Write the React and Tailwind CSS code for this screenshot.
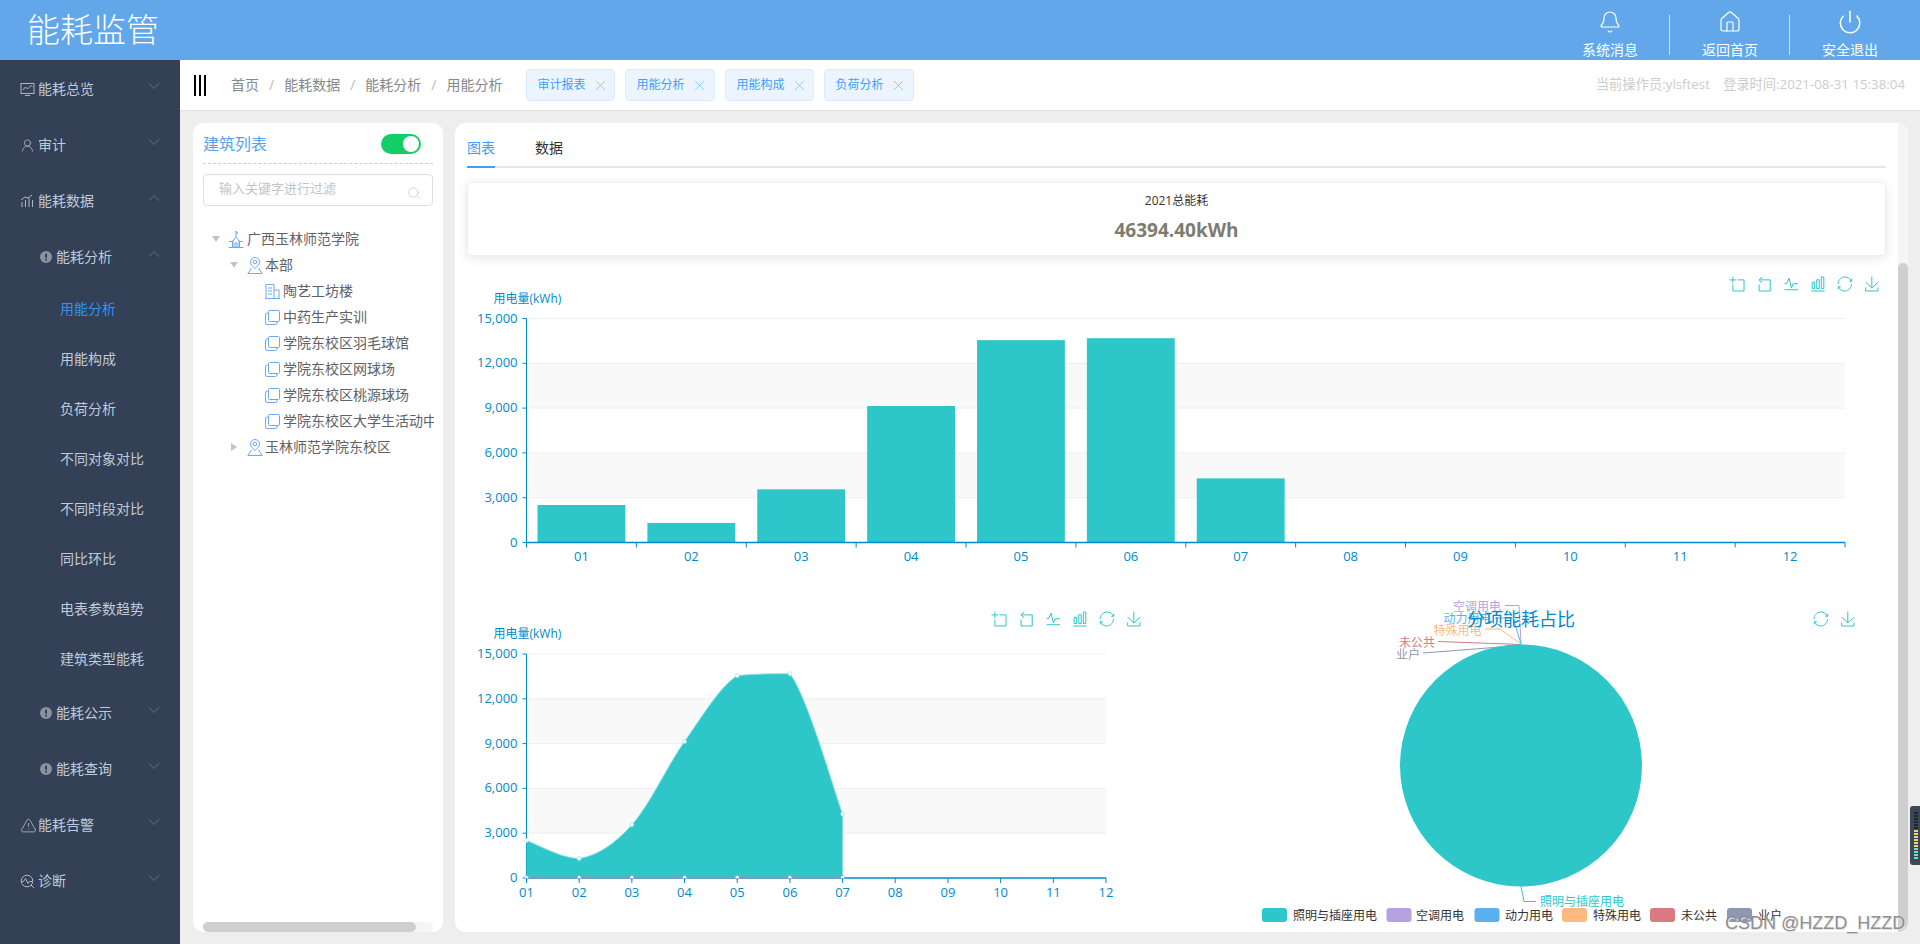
import React from "react";
import { Bell, ChevronDown, ChevronUp, House, Power, Search, UserRound, TriangleAlert, X } from "lucide-react";

const AXIS = "#008acd";
const TEAL = "#2ec7c9";
const months = ["01", "02", "03", "04", "05", "06", "07", "08", "09", "10", "11", "12"];
const values = [2510, 1310, 3560, 9140, 13550, 13680, 4294];
const ticks = [0, 3000, 6000, 9000, 12000, 15000];

const toolPaths = {
  zoom: "M0,13.5h26.9 M13.5,26.9V0 M32.1,13.5H58V58H13.5V32.1",
  back: "M22,1.4L9.9,13.5l12.3,12.3 M10.3,13.5H54.9v44.6H10.3v-26",
  line: "M4.1,28.9h7.8l10.3-22.1l9.4,38.7l7.3-16.6H58 M4.1,52.9h53.9",
  bar: "M6.7,22.9h10V48h-10V22.9z M24.9,13h10v35h-10V13z M43.2,2h10v46h-10V2z M3.1,58h53.7",
  restore:
    "M47,18.9h9.8V8.7 M56.3,20.1C52.1,9,40.5,0.6,26.8,2.1C12.6,3.7,1.6,16.2,2.1,30.6 M13,41.1H3.1v10.2 M3.7,39.9c4.2,11.1,15.8,19.5,27.4,18c14.2-1.6,25.2-14.1,24.7-28.5",
  save: "M4.7,22.9L29.3,45.5L54.7,23.4 M4.6,43.6L4.6,58L53.8,58L53.8,43.6 M29.2,45.1L29.2,0",
};

function Tool({ type, x, y }) {
  return (
    <svg x={x - 8} y={y - 8} width="16" height="16" viewBox="-2 -2 64 64">
      <path d={toolPaths[type]} fill="none" stroke={TEAL} strokeWidth="4" />
    </svg>
  );
}

function Grid({ left, right, top, bottom }) {
  const step = (bottom - top) / 5;
  return (
    <g>
      {[1, 3].map((i) => (
        <rect key={i} x={left} y={bottom - step * (i + 1)} width={right - left} height={step} fill="#f9f9f9" />
      ))}
      {ticks.map((t, i) => (
        <g key={t}>
          {i > 0 && <line x1={left} x2={right} y1={bottom - step * i} y2={bottom - step * i} stroke="#eee" />}
          <line x1={left - 4} x2={left} y1={bottom - step * i} y2={bottom - step * i} stroke={AXIS} />
          <text x={left - 9} y={bottom - step * i + 4} textAnchor="end" fontSize="13" fill={AXIS}>
            {t.toLocaleString("en-US")}
          </text>
        </g>
      ))}
      <line x1={left} x2={left} y1={top} y2={bottom} stroke={AXIS} />
      <text x={left - 33} y={top - 16} fontSize="12" fill={AXIS}>
        用电量(kWh)
      </text>
    </g>
  );
}

function BarChart() {
  const left = 526.5, right = 1845, top = 318.5, bottom = 542.5;
  const band = (right - left) / 12;
  return (
    <svg width="1419" height="344" viewBox="467 256 1419 344" className="block">
      {["zoom", "back", "line", "bar", "restore", "save"].map((t, i) => (
        <Tool key={t} type={t} x={1737 + i * 27} y={284} />
      ))}
      <Grid left={left} right={right} top={top} bottom={bottom} />
      {values.map((v, i) => {
        const h = (v / 15000) * (bottom - top);
        return <rect key={i} x={left + band * i + 11} y={bottom - h} width={band - 22} height={h} fill={TEAL} />;
      })}
      <line x1={left} x2={right} y1={bottom} y2={bottom} stroke={AXIS} strokeWidth="1.5" />
      {months.map((m, i) => (
        <g key={m}>
          <line x1={left + band * i} x2={left + band * i} y1={bottom} y2={bottom + 5} stroke={AXIS} />
          <text x={left + band * (i + 0.5)} y={bottom + 18} textAnchor="middle" fontSize="13" fill={AXIS}>
            {m}
          </text>
        </g>
      ))}
      <line x1={right} x2={right} y1={bottom} y2={bottom + 5} stroke={AXIS} />
    </svg>
  );
}

// echarts style smoothing, control points kept between the neighbours
function smoothPath(pts) {
  let d = `M${pts[0][0]},${pts[0][1]}`;
  const clamp = (v, a, b) => Math.max(Math.min(a, b), Math.min(Math.max(a, b), v));
  for (let i = 0; i < pts.length - 1; i++) {
    const p0 = pts[i - 1] || pts[i];
    const p1 = pts[i];
    const p2 = pts[i + 1];
    const p3 = pts[i + 2] || p2;
    const c1x = p1[0] + (p2[0] - p0[0]) * 0.17;
    const c1y = clamp(p1[1] + (p2[1] - p0[1]) * 0.17, p1[1], p2[1]);
    const c2x = p2[0] - (p3[0] - p1[0]) * 0.17;
    const c2y = clamp(p2[1] - (p3[1] - p1[1]) * 0.17, p1[1], p2[1]);
    d += ` C${c1x},${c1y} ${c2x},${c2y} ${p2[0]},${p2[1]}`;
  }
  return d;
}

function AreaChart() {
  const left = 526.5, right = 1106, top = 654, bottom = 878;
  const step = (right - left) / 11;
  const pts = values.map((v, i) => [left + step * i, bottom - (v / 15000) * (bottom - top)]);
  const last = pts[pts.length - 1][0];
  return (
    <svg width="703" height="332" viewBox="467 600 703 332" className="block shrink-0">
      {["zoom", "back", "line", "bar", "restore", "save"].map((t, i) => (
        <Tool key={t} type={t} x={999 + i * 27} y={619} />
      ))}
      <Grid left={left} right={right} top={top} bottom={bottom} />
      <path d={`${smoothPath(pts)} L${last},${bottom} L${left},${bottom} Z`} fill={TEAL} />
      <path d={smoothPath(pts)} fill="none" stroke="#8fe0e1" strokeWidth="1" />
      <line x1={left} x2={right} y1={bottom} y2={bottom} stroke={AXIS} strokeWidth="1.5" />
      <line x1={left} x2={last} y1={bottom - 0.5} y2={bottom - 0.5} stroke="#8d98b3" strokeWidth="2" />
      {pts.map((p, i) => (
        <g key={i}>
          <circle cx={p[0]} cy={p[1]} r="2" fill="#fff" stroke="#8fe0e1" strokeWidth="0.6" />
          <circle cx={p[0]} cy={bottom - 0.5} r="2" fill="#fff" stroke="#8d98b3" strokeWidth="0.6" />
        </g>
      ))}
      {months.map((m, i) => (
        <g key={m}>
          <line x1={left + step * i} x2={left + step * i} y1={bottom} y2={bottom + 5} stroke={AXIS} />
          <text x={left + step * i} y={bottom + 19} textAnchor="middle" fontSize="13" fill={AXIS}>
            {m}
          </text>
        </g>
      ))}
    </svg>
  );
}

const legend = [
  { name: "照明与插座用电", color: "#2ec7c9", box: 1262, text: 1293 },
  { name: "空调用电", color: "#b6a2de", box: 1386.5, text: 1416 },
  { name: "动力用电", color: "#5ab1ef", box: 1474.5, text: 1505 },
  { name: "特殊用电", color: "#ffb980", box: 1562, text: 1593 },
  { name: "未公共", color: "#d87a80", box: 1650, text: 1681 },
  { name: "业户", color: "#8d98b3", box: 1727, text: 1758 },
];

const pieLabels = [
  { name: "空调用电", color: "#b6a2de", x: 1453, y: 611, line: "M1505,605.5 H1519 L1521,644" },
  { name: "动力用电", color: "#5ab1ef", x: 1443.5, y: 623, line: "M1495,618 H1513 L1521,644" },
  { name: "特殊用电", color: "#ffb980", x: 1433.5, y: 635, line: "M1485,629 H1500 L1521,644" },
  { name: "未公共", color: "#d87a80", x: 1399, y: 647, line: "M1438,641.5 L1521,644.5" },
  { name: "业户", color: "#8d98b3", x: 1396, y: 659, line: "M1423,653 L1494,647.5 L1521,644.5" },
];

function PieChart() {
  return (
    <svg width="716" height="332" viewBox="1170 600 716 332" className="block shrink-0">
      {pieLabels.map((l) => (
        <g key={l.name}>
          <path d={l.line} fill="none" stroke={l.color} />
          <text x={l.x} y={l.y} fontSize="12" fill={l.color}>
            {l.name}
          </text>
        </g>
      ))}
      <text x="1521" y="626" textAnchor="middle" fontSize="18" fill={AXIS}>
        分项能耗占比
      </text>
      <Tool type="restore" x={1821} y={619} />
      <Tool type="save" x={1848} y={619} />
      <circle cx="1521" cy="765.5" r="121" fill={TEAL} />
      <path d="M1521,886 L1524,901.5 H1536" fill="none" stroke={TEAL} />
      <text x="1540" y="906" fontSize="12" fill={TEAL}>
        照明与插座用电
      </text>
      {legend.map((l) => (
        <g key={l.name}>
          <rect x={l.box} y="908" width="25" height="14" rx="3" fill={l.color} />
          <text x={l.text} y="920" fontSize="12" fill="#333">
            {l.name}
          </text>
        </g>
      ))}
    </svg>
  );
}

// sidebar icons
const MonitorIcon = () => (
  <svg width="15" height="15" viewBox="0 0 15 15" fill="none" stroke="currentColor">
    <rect x="1" y="1.5" width="13" height="10" />
    <path d="M3 8l2.500-3 2 2 3.500-3.500 1.500 1.500M5 13.500h5" />
  </svg>
);
const BarsIcon = () => (
  <svg width="14" height="14" viewBox="0 0 14 14" fill="none" stroke="currentColor">
    <path d="M2 13V8M5.500 13V6M9 13V4M12.500 13V6M1 6l4-3 3 1 4-3" />
  </svg>
);
const WarnDot = () => (
  <svg width="12" height="12" viewBox="0 0 12 12">
    <circle cx="6" cy="6" r="6" fill="#8b929e" />
    <rect x="5" y="2.500" width="2" height="4.500" rx="1" fill="#334055" />
    <circle cx="6" cy="8.800" r="1" fill="#334055" />
  </svg>
);
const DiagnoseIcon = () => (
  <svg width="15" height="15" viewBox="0 0 15 15" fill="none" stroke="currentColor">
    <circle cx="7" cy="7" r="5.800" />
    <path d="M1.500 7.500h2l2-3 2.500 5 1.500-2h2.500M11 11l3 3" />
  </svg>
);

const menu = [
  { label: "能耗总览", icon: <MonitorIcon />, level: 0, arrow: "down" },
  { label: "审计", icon: <UserRound size={15} strokeWidth={1.3} />, level: 0, arrow: "down" },
  { label: "能耗数据", icon: <BarsIcon />, level: 0, arrow: "up" },
  { label: "能耗分析", icon: <WarnDot />, level: 1, arrow: "up" },
  { label: "用能分析", level: 2, active: true },
  { label: "用能构成", level: 2 },
  { label: "负荷分析", level: 2 },
  { label: "不同对象对比", level: 2 },
  { label: "不同时段对比", level: 2 },
  { label: "同比环比", level: 2 },
  { label: "电表参数趋势", level: 2 },
  { label: "建筑类型能耗", level: 2 },
  { label: "能耗公示", icon: <WarnDot />, level: 1, arrow: "down" },
  { label: "能耗查询", icon: <WarnDot />, level: 1, arrow: "down" },
  { label: "能耗告警", icon: <TriangleAlert size={17} strokeWidth={1.2} />, level: 0, arrow: "down" },
  { label: "诊断", icon: <DiagnoseIcon />, level: 0, arrow: "down" },
];

function MenuRow({ item }) {
  if (item.level === 2) {
    return (
      <div className={`h-[50px] flex items-center pl-[60px] text-sm ${item.active ? "text-[#2b95f5]" : "text-[#bfcbd9]"}`}>
        {item.label}
      </div>
    );
  }
  return (
    <div className={`h-14 flex items-center pt-[2px] text-sm text-[#bfcbd9] ${item.level === 1 ? "pl-10" : "pl-5"}`}>
      <span className={`flex items-center justify-start text-[#aeb6c2] ${item.level === 1 ? "w-4" : "w-[18px]"}`}>
        {item.icon}
      </span>
      <span>{item.label}</span>
      <span className="ml-auto mr-[16px] text-[#79849a] -mt-[7px]">
        {item.arrow === "up" ? <ChevronUp size={20} strokeWidth={0.8} /> : <ChevronDown size={20} strokeWidth={0.8} />}
      </span>
    </div>
  );
}

function Sidebar() {
  return (
    <aside className="w-[180px] shrink-0 bg-[#334055]">
      {menu.map((item, i) => (
        <MenuRow key={i} item={item} />
      ))}
    </aside>
  );
}

function HeaderBtn({ icon, label, border }) {
  return (
    <div className="w-[120px] h-full flex justify-center relative">
      <div className="flex flex-col items-center text-white text-sm pt-[7px]">
        <span className="h-[30px] flex items-center">{icon}</span>
        <span className="mt-[3px] leading-5">{label}</span>
      </div>
      {border && <span className="absolute right-0 top-[15px] h-10 w-px bg-[#cfe3f8]" />}
    </div>
  );
}

function Header() {
  return (
    <header className="h-[60px] shrink-0 bg-[#62a7ea] flex items-center pl-[27px] pr-[10px]">
      <h1 className="text-[33px] font-light text-white">能耗监管</h1>
      <div className="ml-auto flex h-full">
        <HeaderBtn icon={<Bell size={24} strokeWidth={1.2} />} label="系统消息" border />
        <HeaderBtn icon={<House size={24} strokeWidth={1.2} />} label="返回首页" border />
        <HeaderBtn icon={<Power size={26} strokeWidth={1.4} />} label="安全退出" />
      </div>
    </header>
  );
}

const tags = [
  { label: "审计报表", w: "w-[89px]" },
  { label: "用能分析", w: "w-[90px]" },
  { label: "用能构成", w: "w-[89px]" },
  { label: "负荷分析", w: "w-[90px]" },
];
const crumbs = ["首页", "能耗数据", "能耗分析", "用能分析"];

function TopBar() {
  return (
    <div className="h-[51px] shrink-0 bg-white border-b border-[#e2e2e2] flex items-center">
      <div className="ml-[14px] flex gap-[3px] h-[21px]">
        <span className="w-[2px] bg-black" />
        <span className="w-[2px] bg-black" />
        <span className="w-[2px] bg-black" />
      </div>
      <div className="ml-[25px] flex text-sm text-[#888]">
        {crumbs.map((c, i) => (
          <span key={c}>
            {i > 0 && <span className="mx-[10px] text-[#bbb]">/</span>}
            {c}
          </span>
        ))}
      </div>
      <div className="ml-[24px] flex gap-[10px]">
        {tags.map((t) => (
          <div key={t.label} className={`${t.w} h-8 bg-[#ecf5ff] border border-[#d9ecff] rounded flex items-center pl-[10px] text-xs text-[#409eff]`}>
            <span>{t.label}</span>
            <X size={17} strokeWidth={0.8} className="ml-[7px] text-[#5aa9ff]" />
          </div>
        ))}
      </div>
      <div className="ml-auto mr-[15px] flex gap-[13px] text-[13.3px] text-[#ccc]">
        <span>当前操作员:ylsftest</span>
        <span>登录时间:2021-08-31 15:38:04</span>
      </div>
    </div>
  );
}

// tree icons
const SchoolIcon = () => (
  <svg width="16" height="18" viewBox="0 0 16 18" fill="none" stroke="#6ea8ef" className="shrink-0">
    <path d="M8 1v5M8 1.500l2 1-2 1M5 11l3-4.500 3 4.500M5 10v7M11 10v7M.5 17.500h15M1 11.500h3.500V17M15 11.500h-3.500V17M7 13h2v4H7z" />
  </svg>
);
const PinIcon = () => (
  <svg width="16" height="17" viewBox="0 0 16 17" fill="none" stroke="#6ea8ef" className="shrink-0">
    <path d="M8 11.500C5.500 9 3.500 7.500 3.500 5a4.500 4.500 0 0 1 9 0c0 2.500-2 4-4.500 6.500z" />
    <circle cx="8" cy="5" r="1.800" />
    <path d="M4.500 11L.8 16.500h14.400L11.500 11" />
  </svg>
);
const DocIcon = () => (
  <svg width="15" height="15" viewBox="0 0 15 15" fill="none" stroke="#6ea8ef" className="shrink-0">
    <path d="M1 14.500V.5h8v14M9 6h5v8.500M0 14.500h15M3 4h4M3 7h4M3 10h4" />
  </svg>
);
const CopyIcon = () => (
  <svg width="15" height="15" viewBox="0 0 15 15" fill="none" stroke="#6ea8ef" className="shrink-0">
    <rect x="3.500" y=".5" width="11" height="11" rx="1" />
    <path d="M3.500 3H2.500A2 2 0 0 0 .5 5v8a1.500 1.500 0 0 0 1.500 1.500h8.500a1.500 1.500 0 0 0 1.500-1.500v-1.500" />
  </svg>
);

const tree = [
  { label: "广西玉林师范学院", pad: "pl-[9px]", caret: "down", icon: <SchoolIcon />, gap: "ml-[3px]", iconPad: "ml-2" },
  { label: "本部", pad: "pl-[27px]", caret: "down", icon: <PinIcon />, gap: "ml-[2px]", iconPad: "ml-[9px]" },
  { label: "陶艺工坊楼", pad: "pl-[62px]", icon: <DocIcon />, gap: "ml-[3px]" },
  { label: "中药生产实训", pad: "pl-[62px]", icon: <CopyIcon />, gap: "ml-[3px]" },
  { label: "学院东校区羽毛球馆", pad: "pl-[62px]", icon: <CopyIcon />, gap: "ml-[3px]" },
  { label: "学院东校区网球场", pad: "pl-[62px]", icon: <CopyIcon />, gap: "ml-[3px]" },
  { label: "学院东校区桃源球场", pad: "pl-[62px]", icon: <CopyIcon />, gap: "ml-[3px]" },
  { label: "学院东校区大学生活动中心", pad: "pl-[62px]", icon: <CopyIcon />, gap: "ml-[3px]" },
  { label: "玉林师范学院东校区", pad: "pl-[27px]", caret: "right", icon: <PinIcon />, gap: "ml-[2px]", iconPad: "ml-[9px]" },
];

function TreeRow({ node }) {
  return (
    <div className={`h-[26px] flex items-center whitespace-nowrap text-sm text-[#606266] ${node.pad}`}>
      {node.caret === "down" && <span className="w-0 h-0 border-x-4 border-x-transparent border-t-[6px] border-t-[#c0c4cc]" />}
      {node.caret === "right" && <span className="w-0 h-0 mx-[1px] border-y-4 border-y-transparent border-l-[6px] border-l-[#c0c4cc]" />}
      <span className={node.iconPad}>{node.icon}</span>
      <span className={node.gap}>{node.label}</span>
    </div>
  );
}

function LeftPanel() {
  return (
    <section className="w-[250px] shrink-0 bg-white rounded-[10px] px-[10px] flex flex-col">
      <div className="h-[41px] flex items-center justify-between border-b border-dashed border-[#ccc] pt-[1px]">
        <span className="text-base text-[#5a9fe8]">建筑列表</span>
        <span className="mr-[12px] w-10 h-5 rounded-full bg-[#13ce66] flex items-center justify-end pr-[2px]">
          <span className="w-4 h-4 rounded-full bg-white" />
        </span>
      </div>
      <div className="mt-[10px] h-8 border border-[#dcdfe6] rounded flex items-center pl-[15px] pr-[11px] text-[13px] text-[#c0c4cc]">
        <span className="-mt-[2px]">输入关键字进行过滤</span>
        <Search size={14} strokeWidth={1.2} className="ml-auto mt-[6px]" />
      </div>
      <div className="mt-5 flex-1 min-h-0 overflow-hidden -mr-[1px]">
        {tree.map((n) => (
          <TreeRow key={n.label} node={n} />
        ))}
      </div>
      <div className="h-[10px] shrink-0 rounded-full bg-[#f5f5f5]">
        <div className="h-full w-[213px] rounded-full bg-[#cfcfcf]" />
      </div>
    </section>
  );
}

function RightPanel() {
  return (
    <section className="flex-1 min-w-0 bg-white rounded-[10px] overflow-hidden flex">
      <div className="flex-1 min-w-0 px-3">
        <div className="h-[45px] border-b-2 border-[#e4e7ed] flex items-end text-sm">
          <span className="text-[#409eff] border-b-2 border-[#409eff] -mb-[2px] h-[30px] w-7">图表</span>
          <span className="ml-10 text-[#303133] h-[28px]">数据</span>
        </div>
        <div className="mt-[14px] h-[74px] rounded border border-[#ebeef5] shadow-[0_2px_12px_0_rgba(0,0,0,0.1)] flex flex-col items-center justify-center">
          <span className="text-xs text-[#333]">2021总能耗</span>
          <span className="mt-[7px] text-[19px] font-bold text-[#7c7c70]">46394.40kWh</span>
        </div>
        <BarChart />
        <div className="flex">
          <AreaChart />
          <PieChart />
        </div>
      </div>
      <div className="w-[10px] shrink-0 bg-[#f5f5f5] flex flex-col justify-end">
        <div className="h-[669px] rounded-t-full bg-[#cfcfcf]" />
      </div>
    </section>
  );
}

const meter = ["d", "d", "d", "d", "d", "d", "y", "y", "y", "y", "y", "y", "g", "g", "g", "g"];

export default function App() {
  return (
    <div className="relative w-screen h-screen overflow-hidden flex flex-col bg-[#eee] font-['Open_Sans','Noto_Sans_CJK_SC',sans-serif]">
      <Header />
      <div className="flex-1 min-h-0 flex">
        <Sidebar />
        <main className="flex-1 min-w-0 flex flex-col">
          <TopBar />
          <div className="flex-1 min-h-0 flex gap-3 pl-[13px] pr-3 pt-3 pb-3">
            <LeftPanel />
            <RightPanel />
          </div>
        </main>
      </div>
      <div className="absolute right-0 top-[806px] w-[10px] h-[59px] bg-[#3d4757] rounded-l-[3px] flex flex-col items-center justify-center gap-[1px] pl-[2px]">
        {meter.map((m, i) => (
          <span key={i} className={`w-1 h-[2px] ${m === "d" ? "bg-[#20262f]" : m === "y" ? "bg-[#e8d873]" : "bg-[#6fdcc8]"}`} />
        ))}
      </div>
      <div className="absolute left-[1725px] top-[912px] text-[18px] leading-[22px] font-['Liberation_Sans',sans-serif] text-[#8f8f8f] [text-shadow:1px_1px_0_#e4e4e4]">
        CSDN @HZZD_HZZD
      </div>
    </div>
  );
}
